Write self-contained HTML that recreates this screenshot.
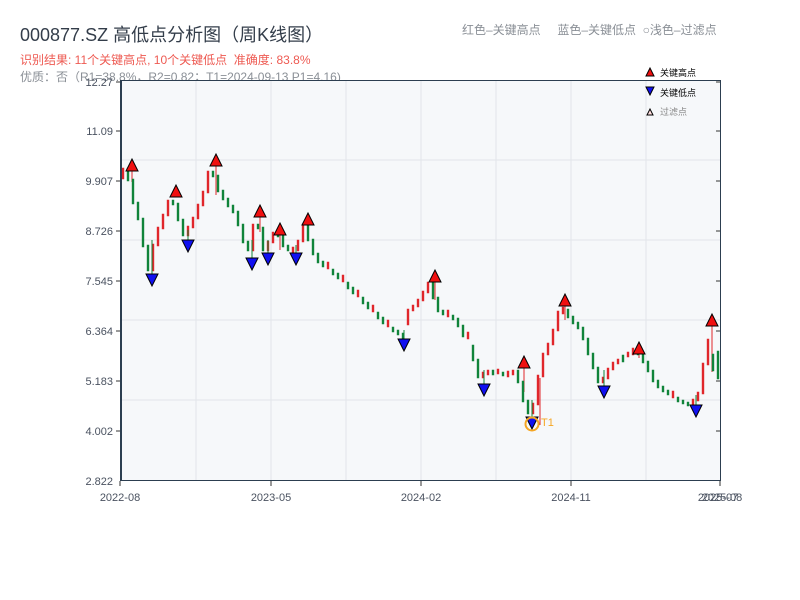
<!DOCTYPE html>
<html><head><meta charset="utf-8"><style>
body{margin:0;width:800px;height:600px;background:#fff;overflow:hidden;font-family:"Liberation Sans","Noto Sans CJK SC",sans-serif;position:relative}
.t{position:absolute;white-space:nowrap}
</style></head><body>
<div class="t" style="left:20px;top:21px;font-size:18px;color:#333d4a">000877.SZ 高低点分析图（周K线图）</div>
<div class="t" style="left:20px;top:51px;font-size:12px;color:#ee5a52">识别结果: 11个关键高点, 10个关键低点&nbsp;&nbsp;准确度: 83.8%</div>
<div class="t" style="left:20px;top:68px;font-size:12px;color:#8a8f96">优质：否（R1=38.8%，R2=0.82；T1=2024-09-13 P1=4.16)</div>
<div class="t" style="left:462px;top:21px;font-size:12px;color:#8a8f96">红色–关键高点&nbsp;&nbsp;&nbsp;&nbsp;&nbsp;蓝色–关键低点&nbsp;&nbsp;○浅色–过滤点</div>
<svg width="800" height="600" style="position:absolute;left:0;top:0" font-family="Liberation Sans, Noto Sans CJK SC, sans-serif">
<rect x="121" y="80" width="600" height="401" fill="#f6f8fa"/>
<g stroke="#e2e5ea">
<line x1="196" y1="80" x2="196" y2="481"/><line x1="271" y1="80" x2="271" y2="481"/><line x1="346" y1="80" x2="346" y2="481"/><line x1="421" y1="80" x2="421" y2="481"/><line x1="496" y1="80" x2="496" y2="481"/><line x1="571" y1="80" x2="571" y2="481"/><line x1="646" y1="80" x2="646" y2="481"/>
<line x1="121" y1="160" x2="721" y2="160"/><line x1="121" y1="240" x2="721" y2="240"/><line x1="121" y1="320" x2="721" y2="320"/><line x1="121" y1="400" x2="721" y2="400"/>
</g>
<g font-size="11" fill="#4a5260" text-anchor="end">
<text x="113" y="86">12.27</text><text x="113" y="135">11.09</text><text x="113" y="185">9.907</text><text x="113" y="235">8.726</text><text x="113" y="285">7.545</text><text x="113" y="335">6.364</text><text x="113" y="385">5.183</text><text x="113" y="435">4.002</text><text x="113" y="485">2.822</text>
</g>
<path d="M116 82H121M116 131H121M116 181H121M116 231H121M116 281H121M116 331H121M116 381H121M116 431H121M716 82H721M716 131H721M716 181H721M716 231H721M716 281H721M716 331H721M716 381H721M716 431H721M120 481V486M271 481V486M421 481V486M571 481V486M720 481V486" stroke="#333"/>
<g font-size="11" fill="#4a5260" text-anchor="middle">
<text x="120" y="501">2022-08</text><text x="271" y="501">2023-05</text><text x="421" y="501">2024-02</text><text x="571" y="501">2024-11</text><text x="718" y="501">2025-07</text><text x="722" y="501">2025-08</text>
</g>
<path stroke="#e0262b" stroke-width="2.4" stroke-linecap="square" fill="none" d="M123 169V178M153 245V270M158 228V245M163 215V228M168 201V215M188 227V235M193 218V227M198 205V218M203 192V205M208 172V192M253 225V250M268 242V250M273 233V242M293 248V252M298 241V250M303 225V241M328 263V268M343 276V281M358 291V296M373 306V311M388 321V326M408 310V324M413 306V310M418 300V306M423 292V300M428 283V292M448 311V316M468 333V338M483 373V377M488 371V374M498 370V373M508 372V376M513 371V374M533 404V413M538 376V404M543 354V376M548 344V354M553 330V344M558 312V330M563 308V313M603 378V382M608 369V378M613 363V369M618 360V363M628 353V356M633 349V354M673 392V397M693 400V405M698 393V400M703 364V393M708 340V364"/>
<path stroke="#e0262b" stroke-width="1" fill="none" d="M132 165V182M216 160V195M260 211V232M280 229V250M308 219V230M435 276V300M524 362V392M540 378V425M565 300V320M639 348V358M712 320V372"/>
<path stroke="#10843a" stroke-width="2.4" stroke-linecap="square" fill="none" d="M128 169V180M133 180V203M138 203V219M143 219V246M148 246V270M173 201V204M178 204V220M183 220V235M213 172V176M218 176V191M223 191V199M228 199V206M233 206V212M238 212V225M243 225V242M248 242V250M258 225V228M263 228V250M278 233V236M283 236V246M288 246V250M308 225V240M313 240V254M318 254V262M323 262V266M333 270V274M338 274V278M348 283V288M353 288V293M363 298V303M368 303V308M378 313V318M383 318V323M393 328V331M398 331V334M403 334V342M433 283V298M438 298V311M443 311V314M453 316V319M458 319V326M463 326V336M473 346V360M478 360V377M493 371V374M503 373V375M518 371V382M523 382V401M528 401V413M568 310V317M573 317V323M578 323V328M583 328V339M588 339V354M593 354V368M598 368V382M623 356V361M638 351V354M643 354V362M648 362V371M653 371V381M658 381V387M663 387V391M668 391V394M678 398V401M683 401V403M688 403V405M713 355V370M718 352V378"/>
<path stroke="#10843a" stroke-width="1" fill="none" d="M152 240V278M188 230V244M252 240V262M268 240V257M296 245V257M404 330V343M484 370V388M532 400V421M604 370V390M696 395V409M121 145V185"/>
<g fill="#f01010" stroke="#000">
<polygon points="126,171 138,171 132,159"/><polygon points="170,197 182,197 176,185"/><polygon points="210,166 222,166 216,154"/><polygon points="254,217 266,217 260,205"/><polygon points="274,235 286,235 280,223"/><polygon points="302,225 314,225 308,213"/><polygon points="429,282 441,282 435,270"/><polygon points="518,368 530,368 524,356"/><polygon points="559,306 571,306 565,294"/><polygon points="633,354 645,354 639,342"/><polygon points="706,326 718,326 712,314"/>
</g>
<g fill="#1010f0" stroke="#000">
<polygon points="146,274 158,274 152,286"/><polygon points="182,240 194,240 188,252"/><polygon points="246,258 258,258 252,270"/><polygon points="262,253 274,253 268,265"/><polygon points="290,253 302,253 296,265"/><polygon points="398,339 410,339 404,351"/><polygon points="478,384 490,384 484,396"/><polygon points="526,417 538,417 532,429"/><polygon points="598,386 610,386 604,398"/><polygon points="690,405 702,405 696,417"/>
</g>
<circle cx="532" cy="424" r="6.5" fill="none" stroke="#f5a623" stroke-width="2"/>
<text x="541" y="426" font-size="11" fill="#f5a623">T1</text>
<path d="M121 80.5H721M720.5 80V481M121 480.5H721" stroke="#2c3e50" fill="none"/>
<line x1="121" y1="80" x2="121" y2="481" stroke="#2c3e50" stroke-width="2"/>
<polygon points="646,76 654,76 650,68" fill="#f01010" stroke="#000"/><text x="660" y="76" font-size="9" fill="#000">关键高点</text>
<polygon points="646,87 654,87 650,95" fill="#1010f0" stroke="#000"/><text x="660" y="96" font-size="9" fill="#000">关键低点</text>
<polygon points="647,115 653,115 650,109" fill="#fdd" stroke="#000"/><text x="660" y="115" font-size="9" fill="#888">过滤点</text>
</svg>
</body></html>
